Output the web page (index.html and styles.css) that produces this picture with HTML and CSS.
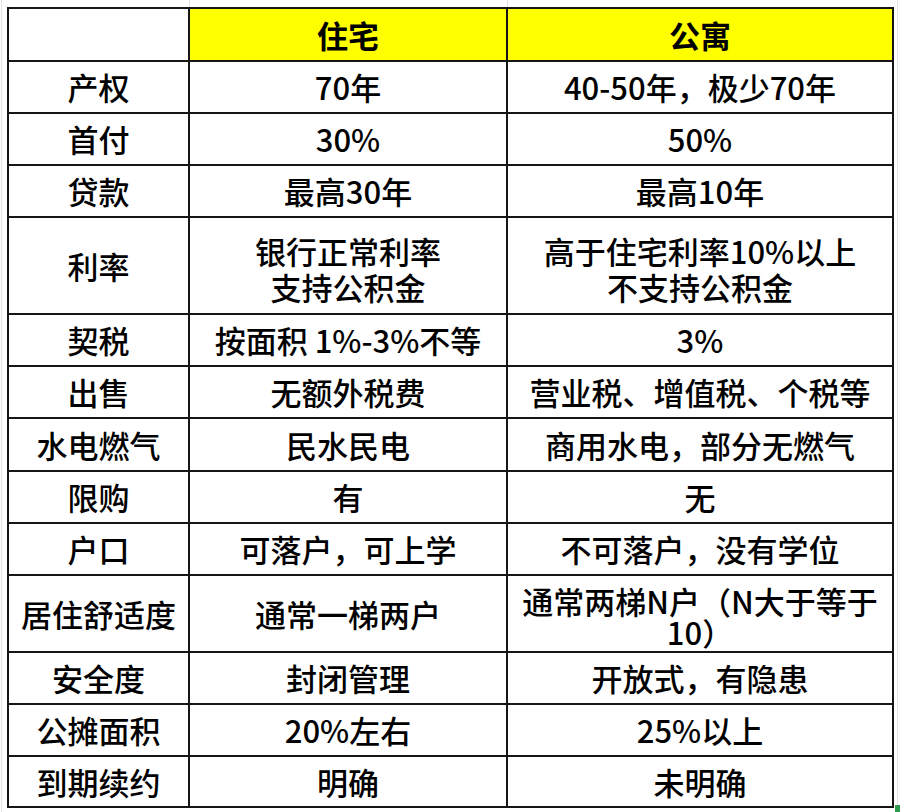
FILE: index.html
```html
<!DOCTYPE html>
<html lang="zh-CN">
<head>
<meta charset="utf-8">
<title>住宅 vs 公寓</title>
<link rel="stylesheet" href="styles.css">
</head>
<body>
<div class="sheet">
  <table class="cmp">
    <colgroup>
      <col class="c1">
      <col class="c2">
      <col class="c3">
    </colgroup>
    <tr class="r-head">
      <td></td>
      <td class="hl">住宅</td>
      <td class="hl">公寓</td>
    </tr>
    <tr class="r52"><td>产权</td><td>70年</td><td>40-50年，极少70年</td></tr>
    <tr class="r52"><td>首付</td><td>30%</td><td>50%</td></tr>
    <tr class="r52"><td>贷款</td><td>最高30年</td><td>最高10年</td></tr>
    <tr class="r97">
      <td>利率</td>
      <td class="two"><div class="ln">银行正常利率</div><div class="ln">支持公积金</div></td>
      <td class="two"><div class="ln">高于住宅利率10%以上</div><div class="ln">不支持公积金</div></td>
    </tr>
    <tr class="r52"><td>契税</td><td>按面积 1%-3%不等</td><td>3%</td></tr>
    <tr class="r52"><td>出售</td><td>无额外税费</td><td>营业税、增值税、个税等</td></tr>
    <tr class="r53"><td>水电燃气</td><td>民水民电</td><td>商用水电，部分无燃气</td></tr>
    <tr class="r52"><td>限购</td><td>有</td><td>无</td></tr>
    <tr class="r52"><td>户口</td><td>可落户，可上学</td><td>不可落户，没有学位</td></tr>
    <tr class="r77">
      <td>居住舒适度</td>
      <td>通常一梯两户</td>
      <td class="two2"><div class="ln">通常两梯N户（N大于等于</div><div class="ln">10）</div></td>
    </tr>
    <tr class="r52"><td>安全度</td><td>封闭管理</td><td>开放式，有隐患</td></tr>
    <tr class="r52"><td>公摊面积</td><td>20%左右</td><td>25%以上</td></tr>
    <tr class="r51"><td>到期续约</td><td>明确</td><td>未明确</td></tr>
  </table>
  <span class="handle"></span>
</div>
</body>
</html>
```

FILE: styles.css
```css
html, body {
  margin: 0;
  padding: 0;
  background: #ffffff;
}

body {
  font-family: "Noto Sans CJK SC", "Noto Sans", sans-serif;
  color: #000;
}

.sheet {
  position: relative;
  width: 900px;
  height: 812px;
  overflow: hidden;
  padding: 7px 0 0 7px;
  box-sizing: border-box;
  background:
    linear-gradient(#e2e2e2, #e2e2e2) 189px 0 / 1px 7px no-repeat,
    linear-gradient(#e2e2e2, #e2e2e2) 507px 0 / 1px 7px no-repeat,
    linear-gradient(#e2e2e2, #e2e2e2) 1px 0 / 1px 812px no-repeat,
    linear-gradient(#e2e2e2, #e2e2e2) 897px 0 / 1px 812px no-repeat;
}

.cmp {
  border-collapse: collapse;
  table-layout: fixed;
  width: 887px;
}

.c1 { width: 181px; }
.c2 { width: 318px; }
.c3 { width: 386px; }

.cmp td {
  border: 2px solid #161616;
  padding: 0;
  text-align: center;
  vertical-align: middle;
  font-size: 31px;
  font-weight: 500;
  line-height: 34px;
  white-space: nowrap;
  overflow: hidden;
}

.cmp td.hl {
  background: #ffff00;
  font-weight: 700;
}

.r-head { height: 53px; }
.r52 { height: 52px; }
.r53 { height: 53px; }
.r51 { height: 51px; }
.r97 { height: 97px; }
.r77 { height: 77px; }

.cmp td.two {
  padding-top: 6px;
}

.cmp td.two .ln {
  height: 36px;
  line-height: 36px;
}

.cmp td.two2 {
  padding-top: 4px;
}

.cmp td.two2 .ln {
  height: 31px;
  line-height: 31px;
}

.handle {
  position: absolute;
  left: 895px;
  top: 805px;
  width: 6px;
  height: 7px;
  background: #2f9a4f;
}
```
